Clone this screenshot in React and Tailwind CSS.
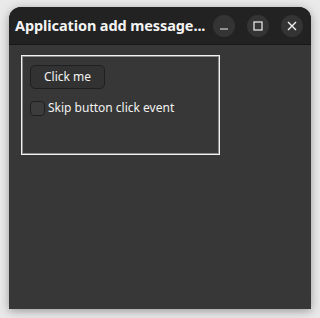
// Small GTK-style dialog window: a frame with a button and a checkbox
import React, { useState } from 'react';

const font = { fontFamily: '"Noto Sans", "Open Sans", sans-serif' };

const TitleButton = ({ children }) => (
    <div className="w-[22px] h-[22px] rounded-full bg-[#343434] flex items-center justify-center text-[#f0f0f0]">
        {children}
    </div>
);

const App = () => {
    const [skip, setSkip] = useState(false);

    return (
        <div className="w-[320px] h-[318px] bg-[#e9e9e9] pt-[7px] pl-[9px]" style={font}>
            <div className="w-[302px] h-[302px] flex flex-col rounded-t-[12px] overflow-hidden bg-[#373737] shadow-[0_2px_10px_rgba(0,0,0,0.35)]">
                <div className="h-[37px] flex items-center bg-[#222222] pl-[6px] pr-[8px] border-b border-[#191919] box-content">
                    <span className="text-[14.5px] font-bold text-[#f4f4f4] tracking-[-0.1px] whitespace-nowrap leading-none">
                        Application add message...
                    </span>
                    <div className="ml-auto flex items-center gap-[12px]">
                        <TitleButton>
                            <svg width="10" height="10" viewBox="0 0 10 10">
                                <path d="M1 8h8" stroke="currentColor" strokeWidth="1.2" />
                            </svg>
                        </TitleButton>
                        <TitleButton>
                            <svg width="10" height="10" viewBox="0 0 10 10">
                                <rect x="1" y="1" width="8" height="8" fill="none" stroke="currentColor" strokeWidth="1.2" />
                            </svg>
                        </TitleButton>
                        <TitleButton>
                            <svg width="10" height="10" viewBox="0 0 10 10">
                                <path d="M1 1l8 8M9 1l-8 8" stroke="currentColor" strokeWidth="1.4" />
                            </svg>
                        </TitleButton>
                    </div>
                </div>

                <div className="flex-1 pt-[10px] pl-[12px]">
                    <div className="w-[199px] h-[100px] border border-[#f2f2f2] shadow-[inset_0_0_0_1px_#8a8a8a] pt-[9px] pl-[8px] flex flex-col items-start gap-[10px]">
                        <button className="w-[75px] h-[24px] rounded-[5px] border border-[#1f1f1f] bg-[#323232] text-[12px] text-[#f2f2f2] flex items-center justify-center">
                            Click me
                        </button>
                        <label className="flex items-center gap-[3px] text-[12px] text-[#f2f2f2] cursor-pointer">
                            <span
                                onClick={() => setSkip(!skip)}
                                className="w-[15px] h-[15px] rounded-[4px] border border-[#1f1f1f] bg-[#3c3c3c]"
                            />
                            Skip button click event
                        </label>
                    </div>
                </div>
            </div>
        </div>
    );
};

export default App;
